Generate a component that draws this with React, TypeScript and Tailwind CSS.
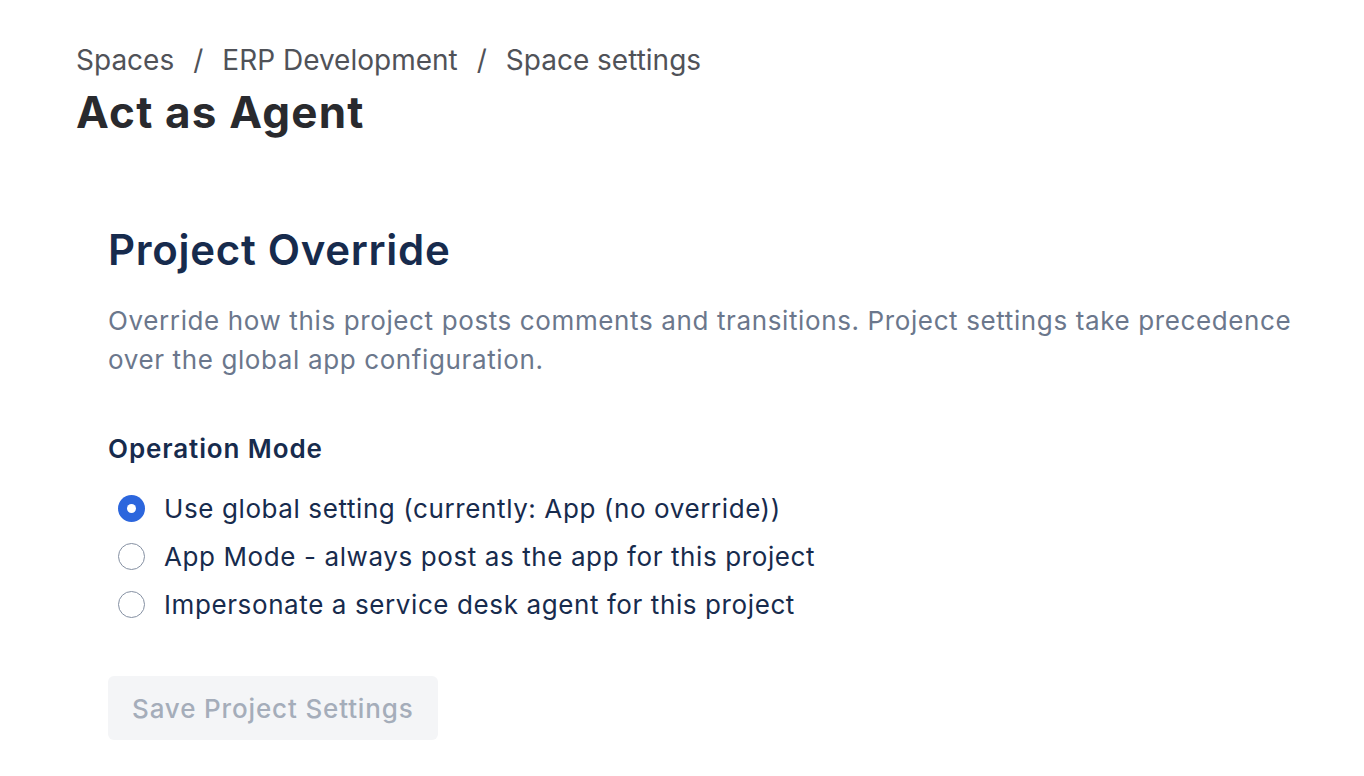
import { useState } from "react";

const options = [
  { id: "global", label: "Use global setting (currently: App (no override))" },
  { id: "app", label: "App Mode - always post as the app for this project" },
  { id: "agent", label: "Impersonate a service desk agent for this project" },
];

function App() {
  const [mode, setMode] = useState("global");

  return (
    <div
      className="min-h-screen bg-white pl-[76px] pr-[40px] pt-[42px]"
      style={{ fontFamily: "Inter, 'Noto Sans', sans-serif" }}
    >
      <nav className="flex items-center text-[28px] leading-[36px] text-[#505258]">
        <span>Spaces</span>
        <span className="mx-[19px]">/</span>
        <span>ERP Development</span>
        <span className="mx-[19px]">/</span>
        <span>Space settings</span>
      </nav>
      <h1 className="mt-2 text-[44px] leading-[52px] font-bold tracking-[1.2px] text-[#292A2E]">
        Act as Agent
      </h1>

      <section className="mt-[87px] pl-8">
        <h2 className="text-[42px] leading-[50px] font-semibold tracking-[0.7px] text-[#172B4D]">
          Project Override
        </h2>
        <p className="mt-[26px] max-w-[1210px] text-[26px] leading-[39px] tracking-[0.62px] text-[#6B778C]">
          Override how this project posts comments and transitions. Project
          settings take precedence over the global app configuration.
        </p>

        <h3 className="mt-[52px] text-[26px] leading-[36px] font-semibold tracking-[0.9px] text-[#172B4D]">
          Operation Mode
        </h3>
        <div className="mt-[17px] flex flex-col">
          {options.map((opt) => (
            <label
              key={opt.id}
              className="flex h-[48px] cursor-pointer items-center gap-[19px] pl-[10px] text-[26px] tracking-[0.6px] text-[#172B4D]"
            >
              <input
                type="radio"
                name="mode"
                checked={mode === opt.id}
                onChange={() => setMode(opt.id)}
                className="sr-only"
              />
              {mode === opt.id ? (
                <span className="flex h-[27px] w-[27px] items-center justify-center rounded-full bg-[#2C66DD]">
                  <span className="h-[9px] w-[9px] rounded-full bg-white" />
                </span>
              ) : (
                <span className="h-[27px] w-[27px] rounded-full border-[1.5px] border-[#8590A2] bg-white" />
              )}
              <span>{opt.label}</span>
            </label>
          ))}
        </div>

        <button
          disabled
          className="mt-[48px] h-[64px] rounded-[6px] bg-[#F4F5F7] px-[24px] text-[26px] font-medium tracking-[0.85px] text-[#A5ADBA]"
        >
          Save Project Settings
        </button>
      </section>
    </div>
  );
}

export default App;
